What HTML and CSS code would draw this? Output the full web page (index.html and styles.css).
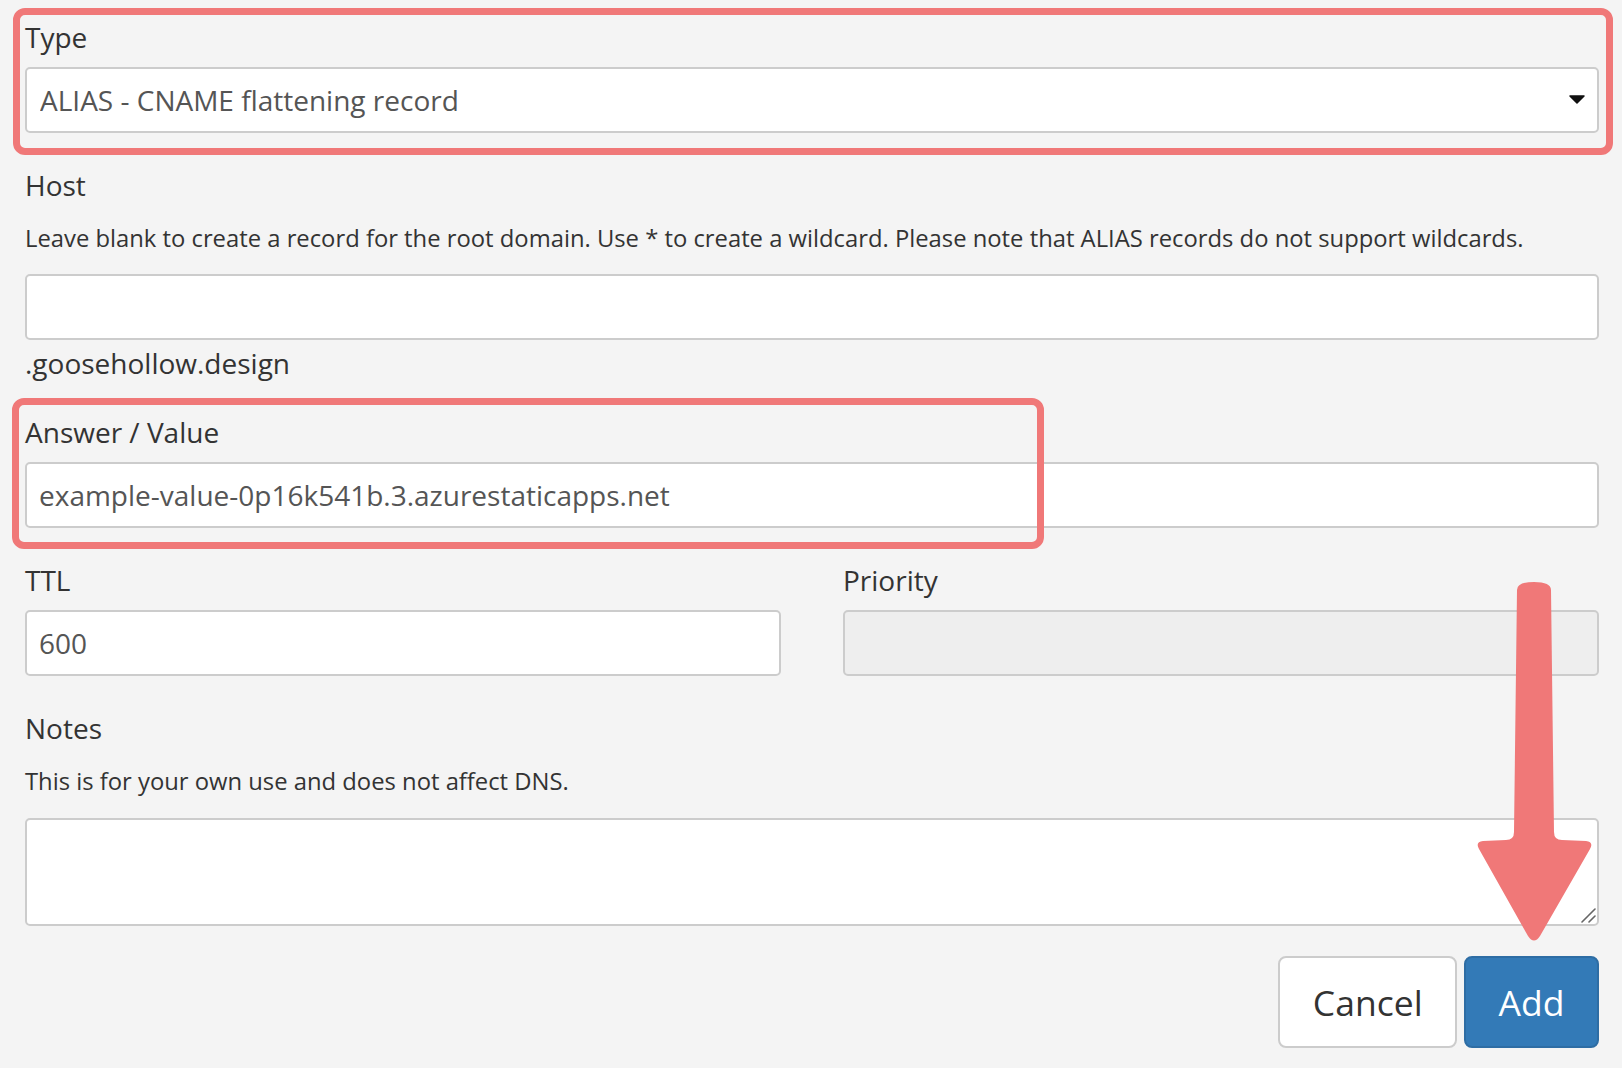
FILE: index.html
```html
<!DOCTYPE html>
<html lang="en">
<head>
    <meta charset="UTF-8">
    <meta name="viewport" content="width=device-width, initial-scale=1.0">
    <title>Add DNS record</title>
    <link rel="stylesheet" href="styles.css">
</head>
<body>

    <div class="page">
        <form class="record-form">
            <div class="form-group">
                <label>Type</label>
                <div class="select-wrap">
                    <select class="form-control">
                        <option>ALIAS - CNAME flattening record</option>
                    </select>
                    <svg class="caret" width="16" height="9" viewBox="0 0 16 9"><path d="M1 1 H15 L8 8 Z" fill="#111" stroke="#111" stroke-width="1.5" stroke-linejoin="round"/></svg>
                </div>
            </div>

            <div class="form-group host">
                <label>Host</label>
                <p class="help">Leave blank to create a record for the root domain. Use * to create a wildcard. Please note that ALIAS records do not support wildcards.</p>
                <input type="text" class="form-control">
                <div class="suffix">.goosehollow.design</div>
            </div>

            <div class="form-group">
                <label>Answer / Value</label>
                <input type="text" class="form-control" value="example-value-0p16k541b.3.azurestaticapps.net">
            </div>

            <div class="row">
                <div class="form-group">
                    <label>TTL</label>
                    <input type="text" class="form-control" value="600">
                </div>
                <div class="form-group">
                    <label>Priority</label>
                    <input type="text" class="form-control" disabled>
                </div>
            </div>

            <div class="form-group notes">
                <label>Notes</label>
                <p class="help">This is for your own use and does not affect DNS.</p>
                <div class="textarea-wrap">
                    <textarea class="form-control"></textarea>
                    <svg class="grip" width="16" height="16" viewBox="0 0 16 16"><path d="M2 15 L15 2 M9 15 L15 9" stroke="#666" stroke-width="1.6" stroke-linecap="round"/></svg>
                </div>
            </div>

            <div class="actions">
                <button type="button" class="btn">Cancel</button>
                <button type="button" class="btn btn-primary">Add</button>
            </div>
        </form>

        <!-- annotations -->
        <div class="mark mark-type"></div>
        <div class="mark mark-answer"></div>
        <svg class="arrow" width="130" height="380" viewBox="0 0 130 380">
            <path d="M47 20 Q47 12 64 12 Q81 12 81 20 L84 262 Q84 270 92 270 L116 271 Q124 272 120 279 L70 366 Q64 375 58 366 L9 279 Q5 272 13 271 L36 270 Q44 270 44 262 Z" fill="#f07878"/>
        </svg>
    </div>

</body>
</html>
```

FILE: styles.css
```css
html, body {
    margin: 0;
    background: #f4f4f4;
}
body {
    font-family: 'Open Sans', sans-serif;
    color: #333;
}
.page {
    position: relative;
    width: 1622px;
    height: 1068px;
    overflow: hidden;
}
.record-form {
    width: 1574px;
    padding: 18px 0 0 25px;
}
.form-group {
    margin-bottom: 33px;
}
.form-group.host {
    margin-bottom: 31px;
}
label {
    display: block;
    font-size: 28px;
    line-height: 38px;
    margin-bottom: 11px;
}
.help {
    font-size: 23.8px;
    line-height: 32px;
    margin: 18px 0 20px;
    color: #333;
}
.form-control {
    display: block;
    box-sizing: border-box;
    width: 100%;
    height: 66px;
    padding: 0 12px;
    font-family: 'Open Sans', sans-serif;
    font-size: 28px;
    color: #555;
    background: #fff;
    border: 2px solid #ccc;
    border-radius: 5px;
    outline: none;
}
.form-control:disabled {
    background: #eee;
}
.select-wrap {
    position: relative;
}
select.form-control {
    -webkit-appearance: none;
    appearance: none;
    padding-left: 13px;
}
.caret {
    position: absolute;
    right: 14px;
    top: 28px;
}
.suffix {
    font-size: 28px;
    line-height: 38px;
    margin-top: 4px;
}
.row {
    display: grid;
    grid-template-columns: 1fr 1fr;
    gap: 62px;
}
.textarea-wrap {
    position: relative;
    margin-top: 21px;
}
textarea.form-control {
    height: 108px;
    padding: 8px 12px;
    resize: none;
}
.grip {
    position: absolute;
    right: 3px;
    bottom: 3px;
}
.notes {
    margin-bottom: 30px;
}
.actions {
    display: flex;
    justify-content: flex-end;
    gap: 7px;
}
.btn {
    height: 92px;
    padding: 0 32.5px;
    font-family: 'Open Sans', sans-serif;
    font-size: 35.5px;
    color: #333;
    background: #fff;
    border: 2px solid #ccc;
    border-radius: 8px;
    cursor: pointer;
}
.btn-primary {
    color: #fff;
    background: #337ab7;
    border-color: #2e6da4;
}
.mark {
    position: absolute;
    border: 7px solid #f07878;
    border-radius: 12px;
    box-sizing: border-box;
}
.mark-type {
    left: 13px;
    top: 8px;
    width: 1600px;
    height: 147px;
}
.mark-answer {
    left: 12px;
    top: 398px;
    width: 1032px;
    height: 151px;
}
.arrow {
    position: absolute;
    left: 1470px;
    top: 570px;
}
```
